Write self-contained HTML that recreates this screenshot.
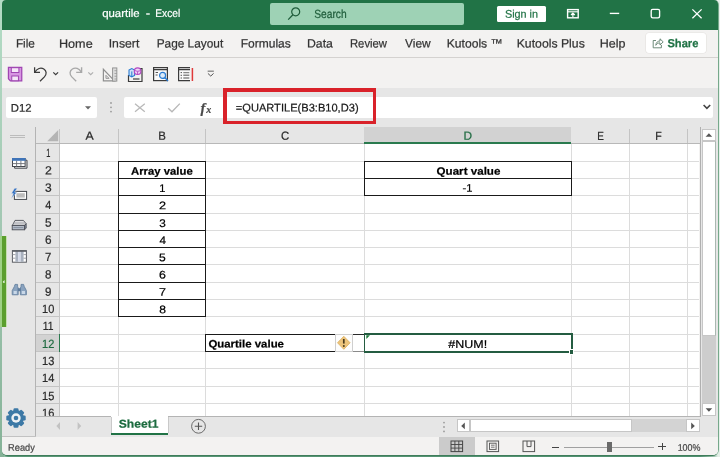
<!DOCTYPE html>
<html><head><meta charset="utf-8"><title>quartile - Excel</title>
<style>
html,body{margin:0;padding:0;}
body{width:720px;height:457px;overflow:hidden;position:relative;background:#f3f2f1;font-family:"Liberation Sans",sans-serif;}
div,span.t,svg{position:absolute;}
span.t{white-space:nowrap;transform-origin:0 50%;-webkit-text-stroke:.22px currentColor;}
#root{left:0;top:0;width:720px;height:457px;will-change:transform;}
</style></head><body><div id="root">
<div style="left:0;top:0;width:720px;height:457px;background:linear-gradient(90deg,#b2dcc4 0,#a4cfb6 3px,#5a9877 8px,#4f9070 700px,#9fc3ae 714px,#e4efe8 718px);"></div>
<div style="left:0;top:0;width:4px;height:457px;background:linear-gradient(180deg,#b4dcc5 0,#a2c7b2 50%,#86b398 100%);"></div>
<div style="left:716px;top:0;width:4px;height:450px;background:#e6f0ea;"></div>
<div style="left:2px;top:0;width:717px;height:456px;box-sizing:border-box;border-style:solid;border-color:#76a98b #76a98b #3f7d5b #3f7d5b;border-width:0 1px 1px 0;border-radius:4px 5px 6.5px 5px;"></div>
<div style="left:2px;top:0;width:716px;height:455px;background:#f3f2f1;border-radius:4px 4px 5px 5px;"></div>
<div style="left:1.6px;top:0;width:716.4px;height:29.5px;background:#217346;border-radius:4px 4px 0 0;"></div>
<span class="t" style="left:102px;top:7px;font-size:11.2px;line-height:13.44px;color:#fff;transform:translate(0.13px,0.01px) rotate(.03deg) scaleX(1.0200);">quartile</span>
<span class="t" style="left:145px;top:7px;font-size:11.2px;line-height:13.44px;color:#fff;transform:translate(0.69px,0.11px) rotate(.03deg) scaleX(1.1753);">-</span>
<span class="t" style="left:155px;top:6px;font-size:11.2px;line-height:13.44px;color:#fff;transform:translate(0.23px,0.67px) rotate(.03deg) scaleX(0.9141);">Excel</span>
<div style="left:270px;top:3px;width:194px;height:22px;background:#9ed2b5;border-radius:2px;"></div>
<svg style="left:286px;top:6px" width="16" height="16" viewBox="0 0 16 16"><circle cx="9.7" cy="5.8" r="4" fill="none" stroke="#1e5c3a" stroke-width="1.2"/><path d="M6.9 8.8 L2.2 13.6" stroke="#1e5c3a" stroke-width="1.3" fill="none"/></svg>
<span class="t" style="left:314px;top:7px;font-size:11.9px;line-height:14.28px;color:#1e5c3a;transform:translate(0.19px,0.20px) rotate(.03deg) scaleX(0.8610);">Search</span>
<div style="left:497.1px;top:5.7px;width:48.8px;height:16.3px;background:#fff;border-radius:1.5px;"></div>
<span class="t" style="left:504px;top:7px;font-size:11.2px;line-height:13.44px;color:#217346;transform:translate(0.96px,0.84px) rotate(.03deg) scaleX(0.9665);">Sign in</span>
<svg style="left:565px;top:6px" width="16" height="16" viewBox="0 0 16 16"><rect x="2.6" y="3.6" width="10.6" height="8.2" fill="none" stroke="#fff" stroke-width="1.4"/><path d="M2.6 5.8H13.2" stroke="#fff" stroke-width="1.1"/><path d="M7.9 11V7.2M6 9L7.9 7.1L9.8 9" stroke="#fff" stroke-width="1.2" fill="none"/></svg>
<svg style="left:600px;top:0" width="118" height="29" viewBox="0 0 118 29"><path d="M9.8 13.4H19.2" stroke="#fff" stroke-width="1.35"/><rect x="51.2" y="9.4" width="8.4" height="8.4" rx="1.5" fill="none" stroke="#fff" stroke-width="1.35"/><path d="M92.4 9.4L101.6 18.2M101.6 9.4L92.4 18.2" stroke="#fff" stroke-width="1.3"/></svg>
<span class="t" style="left:15px;top:36px;font-size:12.1px;line-height:14.52px;color:#333;transform:translate(0.91px,0.57px) rotate(.03deg) scaleX(0.9745);">File</span>
<span class="t" style="left:58px;top:36px;font-size:12.1px;line-height:14.52px;color:#333;transform:translate(0.95px,0.66px) rotate(.03deg) scaleX(1.0454);">Home</span>
<span class="t" style="left:108px;top:36px;font-size:12.1px;line-height:14.52px;color:#333;transform:translate(0.69px,0.59px) rotate(.03deg) scaleX(1.0121);">Insert</span>
<span class="t" style="left:156px;top:36px;font-size:12.1px;line-height:14.52px;color:#333;transform:translate(0.63px,0.57px) rotate(.03deg) scaleX(0.9807);">Page Layout</span>
<span class="t" style="left:240px;top:36px;font-size:12.1px;line-height:14.52px;color:#333;transform:translate(0.74px,0.57px) rotate(.03deg) scaleX(0.9927);">Formulas</span>
<span class="t" style="left:306px;top:36px;font-size:12.1px;line-height:14.52px;color:#333;transform:translate(0.99px,0.61px) rotate(.03deg) scaleX(1.0156);">Data</span>
<span class="t" style="left:349px;top:36px;font-size:12.1px;line-height:14.52px;color:#333;transform:translate(0.95px,0.59px) rotate(.03deg) scaleX(0.9345);">Review</span>
<span class="t" style="left:405px;top:36px;font-size:12.1px;line-height:14.52px;color:#333;transform:translate(0.07px,0.58px) rotate(.03deg) scaleX(0.9864);">View</span>
<span class="t" style="left:446px;top:36px;font-size:12.1px;line-height:14.52px;color:#333;transform:translate(0.72px,0.53px) rotate(.03deg) scaleX(1.0027);">Kutools ™</span>
<span class="t" style="left:516px;top:36px;font-size:12.1px;line-height:14.52px;color:#333;transform:translate(0.71px,0.55px) rotate(.03deg) scaleX(1.0122);">Kutools Plus</span>
<span class="t" style="left:599px;top:36px;font-size:12.1px;line-height:14.52px;color:#333;transform:translate(0.68px,0.49px) rotate(.03deg) scaleX(1.0356);">Help</span>
<div style="left:646.4px;top:33.1px;width:60px;height:20px;background:#fff;border-radius:3px;box-shadow:0 0 0 .6px #e4e2e0;"></div>
<svg style="left:650.6px;top:36.3px" width="14" height="14" viewBox="0 0 14 14"><path d="M5 4.5H2.2V11.8H10.4V9" fill="none" stroke="#5f7f6c" stroke-width=".9"/><path d="M4.8 9.3C5 6.4 6.8 5 9 5V2.8L12.2 5.9L9 9V6.9C7.3 6.9 5.9 7.5 4.8 9.3Z" fill="none" stroke="#5f7f6c" stroke-width=".9"/></svg>
<span class="t" style="left:667px;top:36px;font-size:11.7px;line-height:14.04px;color:#217346;font-weight:bold;transform:translate(0.40px,0.21px) rotate(.03deg) scaleX(0.9544);">Share</span>
<div style="left:1.6px;top:57.3px;width:716px;height:1px;background:#d4d2d0;"></div>
<svg style="left:7.2px;top:66.3px" width="16.2" height="16.2" viewBox="0 0 17 17"><path d="M1.5 1.5H15.5V15.5H3.5L1.5 13.5Z" fill="#d795e2" stroke="#a045b2" stroke-width="1.3"/><rect x="4.5" y="1.8" width="8" height="5" fill="#f5e6f8" stroke="#9b3fae" stroke-width="1"/><rect x="5" y="10.5" width="7" height="5" fill="#f5e6f8" stroke="#9b3fae" stroke-width="1"/></svg>
<svg style="left:31px;top:64px" width="30" height="20" viewBox="0 0 30 20"><path d="M3.6 3.3V8.3H9" fill="none" stroke="#3b3b3b" stroke-width="1.25"/><path d="M3.9 8.1C6 4.5 9.8 3.1 12.8 5C15.7 6.9 15.9 10.2 13.4 12.9L9 17.2" fill="none" stroke="#3b3b3b" stroke-width="1.25"/><path d="M22.3 8.3L24.7 10.7L27.1 8.3" fill="none" stroke="#3b3b3b" stroke-width="1.2"/></svg>
<svg style="left:66px;top:64px" width="30" height="20" viewBox="0 0 30 20"><path d="M15.6 3.3V8.3H10.2" fill="none" stroke="#a8a8a8" stroke-width="1.35"/><path d="M15.3 8.1C13.2 4.5 9.4 3.1 6.4 5C3.5 6.9 3.3 10.2 5.8 12.9L10.2 17.2" fill="none" stroke="#a8a8a8" stroke-width="1.35"/><path d="M22.3 8.3L24.7 10.7L27.1 8.3" fill="none" stroke="#b0b0b0" stroke-width="1.2"/></svg>
<svg style="left:101.6px;top:66.6px" width="16.6" height="15.7" viewBox="0 0 18 17"><path d="M1.5 2.5V15H13.5Z" fill="none" stroke="#8f8f8f" stroke-width="1.3"/><path d="M4.3 9V12.3H7.6Z" fill="none" stroke="#8f8f8f" stroke-width="1"/><rect x="11.5" y="1" width="4.6" height="14.3" fill="#dcdcdc" stroke="#8f8f8f" stroke-width="1"/><path d="M13.5 4H16M13.5 7H16M13.5 10H16M13.5 13H16" stroke="#8f8f8f" stroke-width=".8"/></svg>
<svg style="left:127px;top:66px" width="17" height="17" viewBox="0 0 17 17"><path d="M1.5 9V15.5H15V2.5H13" fill="none" stroke="#3b3b3b" stroke-width="1.2"/><path d="M6 13H12.5" stroke="#3b3b3b" stroke-width="1.2"/><path d="M2 4L4.8 2.6L7.6 4V9.4L4.8 10.8L2 9.4Z" fill="#cfe3f7" stroke="#2b7cd3" stroke-width="1.1"/><path d="M4.8 5.4V10.5" stroke="#2b7cd3" stroke-width="1"/><circle cx="10.6" cy="5.2" r="3.3" fill="#f0d4f5" stroke="#b146c2" stroke-width="1.1"/><path d="M7.6 4.3C9.5 5.6 11.8 5.6 13.6 4.3M10.6 5.4V8.4" fill="none" stroke="#b146c2" stroke-width=".9"/></svg>
<svg style="left:152px;top:66px" width="18" height="17" viewBox="0 0 18 17"><rect x="1.6" y="1.6" width="13.8" height="13" fill="#fafafa" stroke="#3b3b3b" stroke-width="1.2"/><path d="M1.6 3.6H15.4" stroke="#3b3b3b" stroke-width="1.3"/><path d="M3.6 6.5H6M3.6 9H5.6" stroke="#555" stroke-width="1"/><circle cx="10.6" cy="9.4" r="3" fill="#dbeaf8" stroke="#2b7cd3" stroke-width="1.2"/><path d="M12.8 11.6L16 14.9" stroke="#2b7cd3" stroke-width="1.5"/></svg>
<svg style="left:177px;top:66px" width="18" height="17" viewBox="0 0 18 17"><path d="M13 1.6H1.6V14.6H13" fill="#fafafa" stroke="#3b3b3b" stroke-width="1.2"/><path d="M1.6 3.6H13" stroke="#3b3b3b" stroke-width="1.3"/><path d="M3.6 6.6H5M3.6 9.3H5M3.6 12H5" stroke="#555" stroke-width="1"/><path d="M6.3 6.6H12.3M6.3 9.3H12.3M6.3 12H12.3" stroke="#888" stroke-width="1.4"/><path d="M15.4 2V15" stroke="#e03a3a" stroke-width="1.5"/></svg>
<svg style="left:206px;top:69px" width="10" height="10" viewBox="0 0 12 12"><path d="M2 2.6H9.4" stroke="#555" stroke-width="1.1"/><path d="M2.3 5.3L5.7 8.5L9.1 5.3" fill="none" stroke="#555" stroke-width="1.2"/></svg>
<div style="left:1.6px;top:88px;width:716px;height:39px;background:#e6e6e6;"></div>
<div style="left:6.3px;top:97.3px;width:90.7px;height:20.6px;background:#fff;border-radius:2px;"></div>
<span class="t" style="left:10px;top:101px;font-size:11.2px;line-height:13.44px;color:#2b2b2b;transform:translate(0.81px,0.74px) rotate(.03deg) scaleX(1.0106);">D12</span>
<svg style="left:84px;top:105px" width="8" height="6" viewBox="0 0 8 6"><path d="M1 1.2H7L4 4.6Z" fill="#666"/></svg>
<svg style="left:108px;top:100px" width="6" height="16" viewBox="0 0 6 16"><circle cx="3" cy="3" r=".9" fill="#9a9a9a"/><circle cx="3" cy="7.3" r=".9" fill="#9a9a9a"/><circle cx="3" cy="11.6" r=".9" fill="#9a9a9a"/></svg>
<div style="left:124px;top:97.3px;width:102px;height:20.6px;background:#fff;border-radius:2px 0 0 2px;"></div>
<svg style="left:130px;top:98px" width="90" height="20" viewBox="0 0 90 20"><path d="M5 5.8L14.8 13.8M14.8 5.8L5 13.8" stroke="#b8b8b8" stroke-width="1.25"/><path d="M38.2 10.2L42 13.8L49.8 5.6" fill="none" stroke="#b8b8b8" stroke-width="1.35"/></svg>
<span class="t" style="left:200.5px;top:98.5px;font-family:'Liberation Serif',serif;font-style:italic;font-weight:bold;font-size:14.5px;line-height:18px;color:#4a4a4a;">f</span>
<span class="t" style="left:206.2px;top:102.5px;font-family:'Liberation Serif',serif;font-style:italic;font-weight:bold;font-size:10px;line-height:14px;color:#4a4a4a;">x</span>
<div style="left:226px;top:97.3px;width:487.3px;height:20.6px;background:#fff;border-radius:0 2px 2px 0;"></div>
<span class="t" style="left:235px;top:101px;font-size:11.2px;line-height:13.44px;color:#1a1a1a;transform:translate(0.79px,0.52px) rotate(.03deg) scaleX(0.9915);">=QUARTILE(B3:B10,D3)</span>
<svg style="left:702px;top:103px" width="10" height="8" viewBox="0 0 10 8"><path d="M1.6 2L4.9 5.3L8.2 2" fill="none" stroke="#444" stroke-width="1.6"/></svg>
<div style="left:223.4px;top:88.1px;width:153.1px;height:3.9px;background:#d9222a;"></div>
<div style="left:223.4px;top:120.8px;width:153.1px;height:3.7px;background:#d9222a;"></div>
<div style="left:223.4px;top:88.1px;width:4px;height:36.4px;background:#d9222a;"></div>
<div style="left:372.6px;top:88.1px;width:3.9px;height:36.4px;background:#d9222a;"></div>
<div style="left:60.2px;top:143.8px;width:639.3px;height:272.7px;background:#fff;"></div>
<div style="left:1.6px;top:127px;width:34px;height:310px;background:#e6e6e6;"></div>
<div style="left:34.8px;top:127px;width:1px;height:309.5px;background:#b4b4b4;"></div>
<div style="left:1.6px;top:435.8px;width:34px;height:0.9px;background:#c2c2c2;"></div>
<div style="left:36px;top:127px;width:663.5px;height:16.80000000000001px;background:#e6e6e6;"></div>
<div style="left:36px;top:143.8px;width:24.200000000000003px;height:272.7px;background:#e6e6e6;"></div>
<div style="left:364.2px;top:127px;width:207.3px;height:15.800000000000011px;background:#d2d2d2;"></div>
<div style="left:364.2px;top:142.20000000000002px;width:207.3px;height:1.8px;background:#2a7a4e;"></div>
<div style="left:36px;top:334.21000000000004px;width:24.200000000000003px;height:17.31px;background:#d2d2d2;"></div>
<div style="left:58.6px;top:334.21000000000004px;width:1.8px;height:17.31px;background:#2a7a4e;"></div>
<div style="left:60.2px;top:160.61px;width:639.3px;height:1px;background:#dcdcdc;"></div>
<div style="left:36px;top:160.61px;width:23.200000000000003px;height:1px;background:#c4c4c4;"></div>
<div style="left:60.2px;top:177.92px;width:639.3px;height:1px;background:#dcdcdc;"></div>
<div style="left:36px;top:177.92px;width:23.200000000000003px;height:1px;background:#c4c4c4;"></div>
<div style="left:60.2px;top:195.23px;width:639.3px;height:1px;background:#dcdcdc;"></div>
<div style="left:36px;top:195.23px;width:23.200000000000003px;height:1px;background:#c4c4c4;"></div>
<div style="left:60.2px;top:212.54px;width:639.3px;height:1px;background:#dcdcdc;"></div>
<div style="left:36px;top:212.54px;width:23.200000000000003px;height:1px;background:#c4c4c4;"></div>
<div style="left:60.2px;top:229.85px;width:639.3px;height:1px;background:#dcdcdc;"></div>
<div style="left:36px;top:229.85px;width:23.200000000000003px;height:1px;background:#c4c4c4;"></div>
<div style="left:60.2px;top:247.16px;width:639.3px;height:1px;background:#dcdcdc;"></div>
<div style="left:36px;top:247.16px;width:23.200000000000003px;height:1px;background:#c4c4c4;"></div>
<div style="left:60.2px;top:264.47px;width:639.3px;height:1px;background:#dcdcdc;"></div>
<div style="left:36px;top:264.47px;width:23.200000000000003px;height:1px;background:#c4c4c4;"></div>
<div style="left:60.2px;top:281.78px;width:639.3px;height:1px;background:#dcdcdc;"></div>
<div style="left:36px;top:281.78px;width:23.200000000000003px;height:1px;background:#c4c4c4;"></div>
<div style="left:60.2px;top:299.09px;width:639.3px;height:1px;background:#dcdcdc;"></div>
<div style="left:36px;top:299.09px;width:23.200000000000003px;height:1px;background:#c4c4c4;"></div>
<div style="left:60.2px;top:316.4px;width:639.3px;height:1px;background:#dcdcdc;"></div>
<div style="left:36px;top:316.4px;width:23.200000000000003px;height:1px;background:#c4c4c4;"></div>
<div style="left:60.2px;top:333.71px;width:639.3px;height:1px;background:#dcdcdc;"></div>
<div style="left:36px;top:333.71px;width:23.200000000000003px;height:1px;background:#c4c4c4;"></div>
<div style="left:60.2px;top:351.02px;width:639.3px;height:1px;background:#dcdcdc;"></div>
<div style="left:36px;top:351.02px;width:23.200000000000003px;height:1px;background:#c4c4c4;"></div>
<div style="left:60.2px;top:368.33px;width:639.3px;height:1px;background:#dcdcdc;"></div>
<div style="left:36px;top:368.33px;width:23.200000000000003px;height:1px;background:#c4c4c4;"></div>
<div style="left:60.2px;top:385.64px;width:639.3px;height:1px;background:#dcdcdc;"></div>
<div style="left:36px;top:385.64px;width:23.200000000000003px;height:1px;background:#c4c4c4;"></div>
<div style="left:60.2px;top:402.95px;width:639.3px;height:1px;background:#dcdcdc;"></div>
<div style="left:36px;top:402.95px;width:23.200000000000003px;height:1px;background:#c4c4c4;"></div>
<div style="left:118.0px;top:143.8px;width:1px;height:272.7px;background:#dcdcdc;"></div>
<div style="left:118.0px;top:129px;width:1px;height:14.800000000000011px;background:#c4c4c4;"></div>
<div style="left:205.0px;top:143.8px;width:1px;height:272.7px;background:#dcdcdc;"></div>
<div style="left:205.0px;top:129px;width:1px;height:14.800000000000011px;background:#c4c4c4;"></div>
<div style="left:363.7px;top:143.8px;width:1px;height:272.7px;background:#dcdcdc;"></div>
<div style="left:571.0px;top:143.8px;width:1px;height:272.7px;background:#dcdcdc;"></div>
<div style="left:628.8px;top:143.8px;width:1px;height:272.7px;background:#dcdcdc;"></div>
<div style="left:628.8px;top:129px;width:1px;height:14.800000000000011px;background:#c4c4c4;"></div>
<div style="left:686.8px;top:143.8px;width:1px;height:272.7px;background:#dcdcdc;"></div>
<div style="left:686.8px;top:129px;width:1px;height:14.800000000000011px;background:#c4c4c4;"></div>
<div style="left:59.300000000000004px;top:129px;width:1px;height:287.5px;background:#c4c4c4;"></div>
<div style="left:36px;top:143.20000000000002px;width:663.5px;height:1.3px;background:#b8b8b8;"></div>
<div style="left:364.2px;top:142.20000000000002px;width:207.3px;height:1.8px;background:#2a7a4e;"></div>
<div style="left:58.6px;top:334.21000000000004px;width:1.8px;height:17.31px;background:#2a7a4e;"></div>
<svg style="left:46px;top:129px" width="13" height="13" viewBox="0 0 13 13"><path d="M12.2 1V12.3H1.2Z" fill="#b4b4b4"/></svg>
<span class="t" style="left:85px;top:128px;font-size:11.8px;line-height:14.16px;color:#2b2b2b;transform:translate(0.47px,0.82px) rotate(.03deg) scaleX(1.0426);">A</span>
<span class="t" style="left:158px;top:128px;font-size:11.8px;line-height:14.16px;color:#2b2b2b;transform:translate(0.24px,0.81px) rotate(.03deg) scaleX(0.9690);">B</span>
<span class="t" style="left:281px;top:128px;font-size:11.8px;line-height:14.16px;color:#2b2b2b;transform:translate(0.06px,0.73px) rotate(.03deg) scaleX(0.9694);">C</span>
<span class="t" style="left:463px;top:128px;font-size:11.8px;line-height:14.16px;color:#1f6b41;transform:translate(0.55px,0.85px) rotate(.03deg) scaleX(1.0072);">D</span>
<span class="t" style="left:597px;top:128px;font-size:11.8px;line-height:14.16px;color:#2b2b2b;transform:translate(0.25px,0.55px) rotate(.03deg) scaleX(0.8409);">E</span>
<span class="t" style="left:655px;top:128px;font-size:11.8px;line-height:14.16px;color:#2b2b2b;transform:translate(0.16px,0.86px) rotate(.03deg) scaleX(0.9000);">F</span>
<span class="t" style="left:46px;top:146px;font-size:12px;line-height:14.4px;color:#2b2b2b;transform:translate(0.15px,0.26px) rotate(.03deg) scaleX(0.6184);">1</span>
<span class="t" style="left:45px;top:163px;font-size:12px;line-height:14.4px;color:#2b2b2b;transform:translate(0.01px,0.50px) rotate(.03deg) scaleX(1.0257);">2</span>
<span class="t" style="left:45px;top:180px;font-size:12px;line-height:14.4px;color:#2b2b2b;transform:translate(0.12px,0.85px) rotate(.03deg) scaleX(0.9991);">3</span>
<span class="t" style="left:45px;top:198px;font-size:12px;line-height:14.4px;color:#2b2b2b;transform:translate(0.34px,0.19px) rotate(.03deg) scaleX(0.9089);">4</span>
<span class="t" style="left:45px;top:215px;font-size:12px;line-height:14.4px;color:#2b2b2b;transform:translate(0.04px,0.59px) rotate(.03deg) scaleX(0.9860);">5</span>
<span class="t" style="left:45px;top:232px;font-size:12px;line-height:14.4px;color:#2b2b2b;transform:translate(0.06px,0.70px) rotate(.03deg) scaleX(0.9829);">6</span>
<span class="t" style="left:45px;top:250px;font-size:12px;line-height:14.4px;color:#2b2b2b;transform:translate(0.02px,0.08px) rotate(.03deg) scaleX(0.9553);">7</span>
<span class="t" style="left:45px;top:267px;font-size:12px;line-height:14.4px;color:#2b2b2b;transform:translate(0.12px,0.39px) rotate(.03deg) scaleX(0.9647);">8</span>
<span class="t" style="left:45px;top:284px;font-size:12px;line-height:14.4px;color:#2b2b2b;transform:translate(0.02px,0.70px) rotate(.03deg) scaleX(0.9601);">9</span>
<span class="t" style="left:42px;top:301px;font-size:12px;line-height:14.4px;color:#2b2b2b;transform:translate(0.08px,0.99px) rotate(.03deg) scaleX(0.9176);">10</span>
<span class="t" style="left:42px;top:319px;font-size:12px;line-height:14.4px;color:#2b2b2b;transform:translate(0.75px,0.27px) rotate(.03deg) scaleX(0.8599);">11</span>
<span class="t" style="left:42px;top:336px;font-size:12px;line-height:14.4px;color:#1f6b41;transform:translate(0.09px,0.60px) rotate(.03deg) scaleX(0.9177);">12</span>
<span class="t" style="left:42px;top:353px;font-size:12px;line-height:14.4px;color:#2b2b2b;transform:translate(0.11px,0.77px) rotate(.03deg) scaleX(0.9209);">13</span>
<span class="t" style="left:42px;top:371px;font-size:12px;line-height:14.4px;color:#2b2b2b;transform:translate(0.09px,0.27px) rotate(.03deg) scaleX(0.9210);">14</span>
<span class="t" style="left:42px;top:389px;font-size:12px;line-height:14.4px;color:#2b2b2b;transform:translate(0.11px,0.01px) rotate(.03deg) scaleX(0.9177);">15</span>
<span class="t" style="left:42px;top:405px;font-size:12px;line-height:14.4px;color:#2b2b2b;transform:translate(0.11px,0.63px) rotate(.03deg) scaleX(0.9201);">16</span>
<div style="left:118px;top:160.61px;width:88px;height:1px;background:#1a1a1a;"></div>
<div style="left:118px;top:177.92px;width:88px;height:1px;background:#1a1a1a;"></div>
<div style="left:118px;top:195.23px;width:88px;height:1px;background:#1a1a1a;"></div>
<div style="left:118px;top:212.54px;width:88px;height:1px;background:#1a1a1a;"></div>
<div style="left:118px;top:229.85px;width:88px;height:1px;background:#1a1a1a;"></div>
<div style="left:118px;top:247.16px;width:88px;height:1px;background:#1a1a1a;"></div>
<div style="left:118px;top:264.47px;width:88px;height:1px;background:#1a1a1a;"></div>
<div style="left:118px;top:281.78px;width:88px;height:1px;background:#1a1a1a;"></div>
<div style="left:118px;top:299.09px;width:88px;height:1px;background:#1a1a1a;"></div>
<div style="left:118px;top:316.4px;width:88px;height:1px;background:#1a1a1a;"></div>
<div style="left:118.0px;top:161.11px;width:1px;height:156.29px;background:#1a1a1a;"></div>
<div style="left:205.0px;top:161.11px;width:1px;height:156.29px;background:#1a1a1a;"></div>
<span class="t" style="left:130px;top:164px;font-size:10.8px;line-height:12.96px;color:#000;font-weight:bold;transform:translate(0.99px,0.69px) rotate(.03deg) scaleX(1.0495);">Array value</span>
<span class="t" style="left:159px;top:181px;font-size:11px;line-height:13.2px;color:#000;transform:translate(0.18px,0.92px) rotate(.03deg) scaleX(1.0044);">1</span>
<span class="t" style="left:158px;top:199px;font-size:11px;line-height:13.2px;color:#000;transform:translate(0.94px,0.36px) rotate(.03deg) scaleX(1.1523);">2</span>
<span class="t" style="left:159px;top:216px;font-size:11px;line-height:13.2px;color:#000;transform:translate(0.22px,0.92px) rotate(.03deg) scaleX(1.0677);">3</span>
<span class="t" style="left:159px;top:233px;font-size:11px;line-height:13.2px;color:#000;transform:translate(0.58px,0.92px) rotate(.03deg) scaleX(1.0618);">4</span>
<span class="t" style="left:159px;top:251px;font-size:11px;line-height:13.2px;color:#000;transform:translate(0.05px,0.16px) rotate(.03deg) scaleX(1.0973);">5</span>
<span class="t" style="left:158px;top:268px;font-size:11px;line-height:13.2px;color:#000;transform:translate(0.97px,0.52px) rotate(.03deg) scaleX(1.1228);">6</span>
<span class="t" style="left:158px;top:285px;font-size:11px;line-height:13.2px;color:#000;transform:translate(0.90px,0.79px) rotate(.03deg) scaleX(1.1378);">7</span>
<span class="t" style="left:159px;top:303px;font-size:11px;line-height:13.2px;color:#000;transform:translate(0.26px,0.14px) rotate(.03deg) scaleX(1.0942);">8</span>
<div style="left:363.7px;top:160.61px;width:208.3px;height:1px;background:#1a1a1a;"></div>
<div style="left:363.7px;top:177.92px;width:208.3px;height:1px;background:#1a1a1a;"></div>
<div style="left:363.7px;top:195.23px;width:208.3px;height:1px;background:#1a1a1a;"></div>
<div style="left:363.7px;top:161.11px;width:1px;height:35.12px;background:#1a1a1a;"></div>
<div style="left:571.0px;top:161.11px;width:1px;height:35.12px;background:#1a1a1a;"></div>
<span class="t" style="left:436px;top:164px;font-size:10.8px;line-height:12.96px;color:#000;font-weight:bold;transform:translate(0.53px,0.79px) rotate(.03deg) scaleX(1.0755);">Quart value</span>
<span class="t" style="left:462px;top:181px;font-size:11px;line-height:13.2px;color:#000;transform:translate(0.60px,0.77px) rotate(.03deg) scaleX(1.0161);">-1</span>
<div style="left:205px;top:333.71px;width:130px;height:1px;background:#1a1a1a;"></div>
<div style="left:352px;top:333.71px;width:12px;height:1px;background:#2a2a2a;"></div>
<div style="left:205px;top:351.02px;width:130px;height:1px;background:#1a1a1a;"></div>
<div style="left:352px;top:351.02px;width:12px;height:1px;background:#8a8a8a;"></div>
<div style="left:205.0px;top:334.21000000000004px;width:1px;height:17.81px;background:#1a1a1a;"></div>
<span class="t" style="left:208px;top:337px;font-size:10.8px;line-height:12.96px;color:#000;font-weight:bold;transform:translate(0.39px,0.55px) rotate(.03deg) scaleX(1.0584);">Quartile value</span>
<div style="left:335px;top:334.01px;width:17.5px;height:17.51px;background:#fdfdfd;box-sizing:border-box;border:1px solid #cfcfcf;"></div>
<svg style="left:335px;top:334.21px" width="18" height="18" viewBox="0 0 18 18"><path d="M8.8 2.3L15.1 8.8L8.8 15.3L2.5 8.8Z" fill="#ecc47c" stroke="#dcae5c" stroke-width=".8"/><path d="M8.8 5V9.6" stroke="#4a3b1e" stroke-width="1.7"/><circle cx="8.8" cy="12" r="1" fill="#4a3b1e"/></svg>
<div style="left:363.7px;top:333.1px;width:209.4px;height:2px;background:#245c41;"></div>
<div style="left:363.7px;top:351.1px;width:209.4px;height:1.8px;background:#245c41;"></div>
<div style="left:363.7px;top:333.1px;width:1.6px;height:19.8px;background:#245c41;"></div>
<div style="left:571.3px;top:333.1px;width:1.8px;height:19.8px;background:#245c41;"></div>
<svg style="left:365.5px;top:335.11px" width="5" height="5" viewBox="0 0 5 5"><path d="M.3 .3H4L.3 4Z" fill="#1e7a3a"/></svg>
<div style="left:568.8px;top:349.4px;width:5px;height:5.2px;background:#fff;"></div>
<div style="left:569.6px;top:350.2px;width:3.9px;height:3.9px;background:#245c41;"></div>
<span class="t" style="left:448px;top:337px;font-size:11.2px;line-height:13.44px;color:#000;transform:translate(0.35px,0.95px) rotate(.03deg) scaleX(1.1134);">#NUM!</span>
<div style="left:699.5px;top:127px;width:18.1px;height:310px;background:#e6e6e6;"></div>
<div style="left:699.6px;top:127px;width:1.2px;height:289.5px;background:#b0b0b0;"></div>
<div style="left:702px;top:141.3px;width:13.8px;height:262px;background:#cdcdcd;"></div>
<div style="left:702px;top:141.3px;width:14px;height:195px;background:#fff;box-sizing:border-box;border:1px solid #c6c6c6;border-right-color:#a9b8b0;"></div>
<div style="left:702px;top:128.7px;width:13.8px;height:12.8px;background:#fff;box-sizing:border-box;border:1px solid #c6c6c6;"></div>
<svg style="left:705px;top:132px" width="8" height="6" viewBox="0 0 8 6"><path d="M.6 4.8L3.9 1.2L7.2 4.8Z" fill="#555"/></svg>
<div style="left:702px;top:403.2px;width:13.8px;height:12.8px;background:#fff;box-sizing:border-box;border:1px solid #c6c6c6;"></div>
<svg style="left:705px;top:407px" width="8" height="6" viewBox="0 0 8 6"><path d="M.6 1.2L3.9 4.8L7.2 1.2Z" fill="#555"/></svg>
<div style="left:36px;top:416.5px;width:681.6px;height:20.5px;background:#e6e6e6;"></div>
<div style="left:36px;top:416.0px;width:663.5px;height:1px;background:#b4b4b4;"></div>
<svg style="left:52px;top:420px" width="34" height="12" viewBox="0 0 34 12"><path d="M8 2L4.4 6L8 10Z" fill="#c2c2c2"/><path d="M25.6 2L29.2 6L25.6 10Z" fill="#c2c2c2"/></svg>
<div style="left:111px;top:416.0px;width:57px;height:16.7px;background:#fff;"></div>
<div style="left:110.5px;top:416.5px;width:0.8px;height:16px;background:#c9c9c9;"></div>
<div style="left:167.6px;top:416.5px;width:0.8px;height:16px;background:#c9c9c9;"></div>
<div style="left:110.5px;top:432.6px;width:57.8px;height:2.3px;background:#217346;"></div>
<span class="t" style="left:118px;top:417px;font-size:11.5px;line-height:13.8px;color:#1c6b3f;font-weight:bold;transform:translate(0.76px,0.72px) rotate(.03deg) scaleX(1.0528);">Sheet1</span>
<svg style="left:190px;top:418px" width="17" height="17" viewBox="0 0 17 17"><circle cx="8.5" cy="8.3" r="6.9" fill="none" stroke="#6a6a6a" stroke-width="1"/><path d="M8.5 4.6V12M4.8 8.3H12.2" stroke="#555" stroke-width="1.1"/></svg>
<svg style="left:441px;top:420px" width="6" height="14" viewBox="0 0 6 14"><circle cx="3" cy="2.6" r=".9" fill="#9a9a9a"/><circle cx="3" cy="7" r=".9" fill="#9a9a9a"/><circle cx="3" cy="11.4" r=".9" fill="#9a9a9a"/></svg>
<div style="left:470px;top:419.4px;width:217px;height:12.8px;background:#d3d3d3;"></div>
<div style="left:456.5px;top:419.4px;width:13.4px;height:12.8px;background:#fff;box-sizing:border-box;border:1px solid #c6c6c6;"></div>
<svg style="left:460px;top:422px" width="6" height="8" viewBox="0 0 6 8"><path d="M4.8 .6L1.2 3.9L4.8 7.2Z" fill="#555"/></svg>
<div style="left:469.8px;top:419.4px;width:162px;height:12.8px;background:#fff;box-sizing:border-box;border:1px solid #c6c6c6;"></div>
<div style="left:686.2px;top:419.4px;width:13.4px;height:12.8px;background:#fff;box-sizing:border-box;border:1px solid #c6c6c6;"></div>
<svg style="left:690px;top:422px" width="6" height="8" viewBox="0 0 6 8"><path d="M1.2 .6L4.8 3.9L1.2 7.2Z" fill="#555"/></svg>
<div style="left:1.6px;top:437px;width:716px;height:18.4px;background:#f3f2f1;border-radius:0 0 5px 5px;"></div>
<span class="t" style="left:8px;top:441px;font-size:9.6px;line-height:11.52px;color:#484848;transform:translate(0.10px,0.75px) rotate(.03deg) scaleX(0.9626);">Ready</span>
<div style="left:439.4px;top:437px;width:35.4px;height:18px;background:#cbcbcb;"></div>
<svg style="left:449.6px;top:440px" width="14" height="13" viewBox="0 0 14 13"><rect x="1" y="1" width="11.6" height="10.6" fill="none" stroke="#444" stroke-width="1"/><path d="M4.9 1V11.6M8.8 1V11.6M1 4.5H12.6M1 8.1H12.6" stroke="#444" stroke-width=".9"/></svg>
<svg style="left:486.2px;top:440px" width="14" height="13" viewBox="0 0 14 13"><rect x="1" y="1" width="11.6" height="10.6" fill="none" stroke="#555" stroke-width="1"/><rect x="3.5" y="3.2" width="6.6" height="6.2" fill="none" stroke="#555" stroke-width=".9"/><path d="M5 5.2H8.6M5 7.2H8.6" stroke="#555" stroke-width=".8"/></svg>
<svg style="left:522.4px;top:440px" width="14" height="13" viewBox="0 0 14 13"><rect x="1" y="1" width="11.6" height="10.6" fill="none" stroke="#555" stroke-width="1"/><path d="M5 1V6.6H9V1" fill="none" stroke="#555" stroke-width="1"/></svg>
<div style="left:552.3px;top:446.5px;width:6.9px;height:1px;background:#444;"></div>
<div style="left:564.4px;top:446.8px;width:89.5px;height:0.9px;background:#a0a0a0;"></div>
<div style="left:607.3px;top:441.8px;width:4.4px;height:10px;background:#6a6a6a;"></div>
<div style="left:658.4px;top:446.3px;width:7.2px;height:1px;background:#444;"></div>
<div style="left:661.5px;top:443.2px;width:1px;height:7.2px;background:#444;"></div>
<span class="t" style="left:677px;top:441px;font-size:9.5px;line-height:11.4px;color:#484848;transform:translate(0.64px,0.78px) rotate(.03deg) scaleX(0.9394);">100%</span>
<div style="left:10.2px;top:135px;width:15.2px;height:0.8px;background:#bcbcbc;"></div>
<div style="left:10.2px;top:137.2px;width:15.2px;height:0.8px;background:#bcbcbc;"></div>
<svg style="left:11px;top:157px" width="18" height="13" viewBox="0 0 18 13"><path d="M14.5 3.2H16V11.2H3.6V9.8" fill="none" stroke="#44474d" stroke-width="1"/><rect x="1.5" y="1.5" width="12.6" height="8" fill="#fff" stroke="#44474d" stroke-width="1"/><rect x="1" y="1" width="13.6" height="2.8" fill="#3f74b8"/><path d="M5.6 3.8V9.5M9.9 3.8V9.5M1.5 6.6H14.1" stroke="#6a6d73" stroke-width=".9"/></svg>
<svg style="left:10px;top:188px" width="19" height="13" viewBox="0 0 19 13"><rect x="4.4" y="3.4" width="12.2" height="8" fill="#fff" stroke="#44474d" stroke-width="1"/><rect x="6.4" y="5.2" width="8.4" height="4.4" fill="#bdbdbd"/><path d="M4.6 .2L1.4 5.6H3.4L1.2 10.4L7 4.2H4.6L7.2 .2Z" fill="#2f6fc4" stroke="#e6e6e6" stroke-width=".5"/></svg>
<svg style="left:10px;top:219px" width="19" height="13" viewBox="0 0 19 13"><path d="M2.4 6.4L5 1.4H13.4L16.2 4.8L14.4 6.4Z" fill="#f6f6f6" stroke="#4a4d55" stroke-width=".9" stroke-linejoin="round"/><path d="M4.2 3.2H14.6M3.4 4.8H15.4" stroke="#8a8d95" stroke-width=".7"/><path d="M14.4 6.4L16.2 4.8V9.2L14.4 10.8Z" fill="#7d8696" stroke="#4a4d55" stroke-width=".8" stroke-linejoin="round"/><rect x="2.2" y="6.4" width="12.2" height="4.4" fill="#b4bcc8" stroke="#4a4d55" stroke-width=".9"/><path d="M3.4 8.6H13.2" stroke="#8791a0" stroke-width="1"/></svg>
<svg style="left:11px;top:249px" width="17" height="15" viewBox="0 0 17 15"><rect x="1.4" y="1.6" width="14" height="11.6" fill="#fff" stroke="#5a5d63" stroke-width="1"/><rect x="4.4" y="2" width="2.8" height="10.8" fill="#a9b1be"/><rect x="7.2" y="2" width="2.6" height="10.8" fill="#d3d9e8"/><rect x="9.8" y="2" width="2.8" height="10.8" fill="#a9b1be"/><path d="M1.4 5.6H4.4M1.4 9.2H4.4M12.6 5.6H15.4M12.6 9.2H15.4" stroke="#8a8d93" stroke-width=".8"/><path d="M1.4 2.2H15.4" stroke="#5a5d63" stroke-width="1.2"/></svg>
<svg style="left:11px;top:282.7px" width="17" height="14" viewBox="0 0 17 14"><path d="M4 1.4H6.6V3.4L7.2 5V11.8H1.2V7.6L3.4 3.4Z" fill="#8aa3bf" stroke="#5f7c9c" stroke-width=".8"/><path d="M12.6 1.4H10V3.4L9.4 5V11.8H15.4V7.6L13.2 3.4Z" fill="#8aa3bf" stroke="#5f7c9c" stroke-width=".8"/><rect x="6.8" y="5.2" width="3" height="3" fill="#5f7c9c"/><rect x="2.6" y="8" width="3.2" height="3" fill="#c9d8e8"/><rect x="10.8" y="8" width="3.2" height="3" fill="#c9d8e8"/></svg>
<svg style="left:5px;top:407px" width="22" height="22" viewBox="-11 -11 22 22"><g fill="#3d79a6"><rect x="-2.5" y="-9.7" width="5" height="19.4" rx="1.2" transform="rotate(0)"/><rect x="-2.5" y="-9.7" width="5" height="19.4" rx="1.2" transform="rotate(45)"/><rect x="-2.5" y="-9.7" width="5" height="19.4" rx="1.2" transform="rotate(90)"/><rect x="-2.5" y="-9.7" width="5" height="19.4" rx="1.2" transform="rotate(135)"/><circle r="7.9"/></g><circle r="4.7" fill="#eef1f4"/><circle r="2.3" fill="#3d79a6"/></svg>
<div style="left:2px;top:236px;width:4px;height:90.5px;background:#5b9f2e;"></div>
<div style="left:6px;top:236px;width:0.6px;height:90.5px;background:#c5e0b0;"></div>
<div style="left:0px;top:236px;width:2px;height:90.5px;background:#9ed285;"></div>
<svg style="left:2px;top:279.6px" width="3.2" height="3.8" viewBox="0 0 4 7"><path d="M3.8 .2V6.8L.2 3.5Z" fill="#eef6e6"/></svg>
</div></body></html>
